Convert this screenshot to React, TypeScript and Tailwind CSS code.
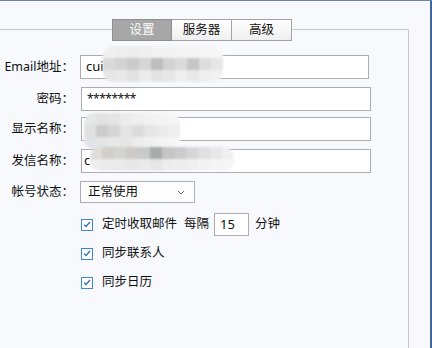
import React from "react";

const font = { fontFamily: '"Noto Sans", "Noto Sans CJK SC", sans-serif' };

function Mosaic({ rows, cell = 12 }: { rows: string[][]; cell?: number }) {
  return (
    <div className="flex flex-col rounded-[10px] overflow-hidden blur-[1px]">
      {rows.map((r, i) => (
        <div key={i} className="flex">
          {r.map((c, j) => (
            <div key={j} style={{ width: cell, height: cell, background: c }} />
          ))}
        </div>
      ))}
    </div>
  );
}

function Check() {
  return (
    <div className="w-[12px] h-[12px] border border-[#3f86d4] bg-white flex items-center justify-center shrink-0">
      <svg width="8" height="7" viewBox="0 0 8 7">
        <path d="M1 3.6 L3 5.5 L7 1" fill="none" stroke="#2f6fb8" strokeWidth="1.3" />
      </svg>
    </div>
  );
}

function Label({ children }: { children: React.ReactNode }) {
  return <div className="w-[74px] text-right shrink-0 leading-none">{children}</div>;
}

export default function App() {
  return (
    <div
      className="relative w-[432px] h-[348px] bg-[#f7f9fd] border-t border-[#6a86a6] overflow-hidden text-[12.5px] text-[#111]"
      style={font}
    >
      <div className="absolute right-0 top-0 bottom-0 w-[2px] bg-[#3d6796]" />
      <div className="pt-[28px] pr-[23px]">
        <div className="border-t border-r border-[#c9c9c9] h-[330px]">
          {/* tabs */}
          <div className="flex ml-[112px] -mt-[11px] w-[180px] h-[22px]">
            <div className="w-[60px] h-full bg-[#a7a7a7] border border-[#8f8f8f] text-white flex items-center justify-center">
              设置
            </div>
            <div className="w-[60px] h-full bg-gradient-to-b from-white to-[#efefef] border-y border-r border-[#a3a3a3] flex items-center justify-center">
              服务器
            </div>
            <div className="w-[60px] h-full bg-gradient-to-b from-white to-[#efefef] border-y border-r border-[#a3a3a3] flex items-center justify-center">
              高级
            </div>
          </div>

          {/* form */}
          <div className="flex flex-col mt-[14px]">
            <div className="flex items-center gap-[6px] h-[24px]">
              <Label>Email地址：</Label>
              <div className="w-[289px] h-[24px] border border-[#adadad] bg-white flex items-center pl-[5px] text-[13px]">
                cui
              </div>
            </div>
            <div className="flex items-center gap-[7px] h-[24px] mt-[8px]">
              <Label>密码：</Label>
              <div className="w-[290px] h-[24px] border border-[#adadad] bg-white flex items-center pl-[5px] text-[12px] tracking-[-0.5px]">
                ********
              </div>
            </div>
            <div className="flex items-center gap-[7px] h-[24px] mt-[6px]">
              <Label>显示名称：</Label>
              <div className="w-[290px] h-[24px] border border-[#adadad] bg-white" />
            </div>
            <div className="flex items-center gap-[7px] h-[24px] mt-[8px]">
              <Label>发信名称：</Label>
              <div className="w-[290px] h-[24px] border border-[#adadad] bg-white flex items-center pl-[2px] text-[13px]">
                c
              </div>
            </div>
            <div className="flex items-center gap-[6px] h-[22px] mt-[8px]">
              <Label>帐号状态：</Label>
              <div className="w-[115px] h-[22px] border border-[#adadad] bg-[#fdfdfd] flex items-center justify-between pl-[7px] pr-[9px]">
                <span>正常使用</span>
                <svg width="8" height="5" viewBox="0 0 8 5">
                  <path d="M1 1 L4 4 L7 1" fill="none" stroke="#666" strokeWidth="1" />
                </svg>
              </div>
            </div>

            <div className="flex items-center ml-[81px] mt-[10px] h-[23px]">
              <Check />
              <span className="ml-[9px]">定时收取邮件</span>
              <span className="ml-[7px]">每隔</span>
              <div className="ml-[5px] w-[35px] h-[23px] border border-[#adadad] bg-white flex items-center pl-[5px] text-[13px]">
                15
              </div>
              <span className="ml-[6px]">分钟</span>
            </div>
            <div className="flex items-center ml-[81px] mt-[6px] h-[23px]">
              <Check />
              <span className="ml-[9px]">同步联系人</span>
            </div>
            <div className="flex items-center ml-[81px] mt-[6px] h-[23px]">
              <Check />
              <span className="ml-[9px]">同步日历</span>
            </div>
          </div>
        </div>
      </div>

      {/* redaction mosaics */}
      <div className="absolute left-[103px] top-[45px]">
        <Mosaic
          rows={[
            ["#f0f0f0", "#eeeeee", "#ececec", "#efefef", "#f2f2f2", "#f2f2f2", "#f4f4f4", "#f5f5f5", "#f6f6f6", "#f7f7f7"],
            ["#d9d9d9", "#d3d3d3", "#cbcbcb", "#d6d6d6", "#bdbdbd", "#d2d2d2", "#dadada", "#c6c6c6", "#dddddd", "#e6e6e6"],
            ["#e6e6e6", "#e9e9e9", "#e1e1e1", "#ececec", "#e3e3e3", "#e7e7e7", "#eeeeee", "#e9e9e9", "#eeeeee", "#f1f1f1"],
          ]}
        />
      </div>
      <div className="absolute left-[84px] top-[112px]">
        <Mosaic
          rows={[
            ["#e6e6e6", "#e2e2e2", "#e5e5e5", "#ececec", "#efefef", "#f2f2f2", "#f3f3f3", "#f5f5f5"],
            ["#e0e0e0", "#cccccc", "#d6d6d6", "#e4e4e4", "#dcdcdc", "#e6e6e6", "#eaeaea", "#efefef"],
            ["#dfe2e6", "#e4e4e4", "#e8e8e8", "#e6e6e6", "#ececec", "#f0f0f0", "#f3f3f3", "#f6f6f6"],
          ]}
        />
      </div>
      <div className="absolute left-[90px] top-[146px]">
        <Mosaic
          rows={[
            ["#e0ddda", "#d2cfcb", "#d3d3cf", "#cdcbc8", "#c9c9c9", "#a9abab", "#c5c5c5", "#cbcbcb", "#d6d6d6", "#e0e0e0", "#e8e8e8", "#f0f0f0"],
            ["#ededed", "#ebebeb", "#eaeaea", "#e8e8e8", "#eaeaea", "#e6e6e6", "#ececec", "#eeeeee", "#f0f0f0", "#f3f3f3", "#f5f5f5", "#f6f6f6"],
          ]}
        />
      </div>
    </div>
  );
}
